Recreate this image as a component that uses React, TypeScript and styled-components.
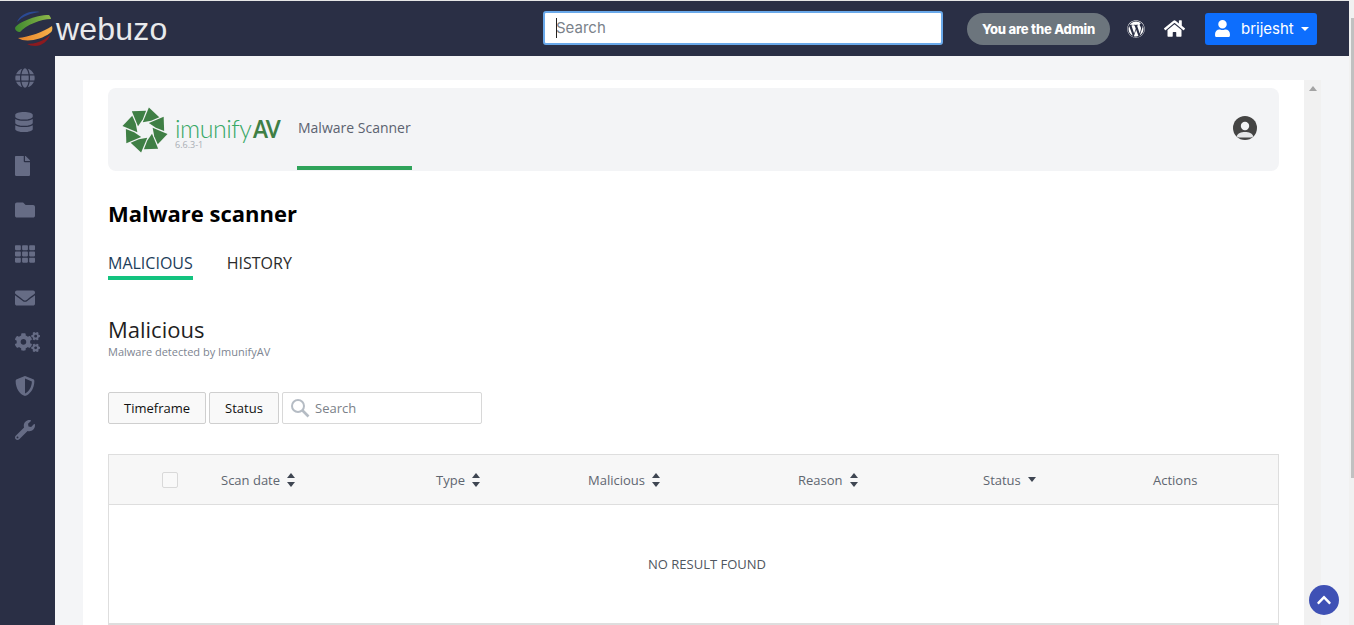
import * as React from "react";
import styled, { createGlobalStyle } from "styled-components";
import {
  FaCogs,
  FaChevronUp,
  FaDatabase,
  FaEnvelope,
  FaFile,
  FaFolder,
  FaGlobe,
  FaHome,
  FaShieldAlt,
  FaTh,
  FaUser,
  FaWordpress,
  FaWrench,
} from "react-icons/fa";

const GlobalStyle = createGlobalStyle`
  html, body {
    margin: 0;
    height: 100%;
    overflow: hidden;
    background: #f4f5f7;
    font-family: "Open Sans", "Noto Sans", sans-serif;
  }
`;

const sideIcons = [
  { icon: FaGlobe, label: "Domains", width: 20 },
  { icon: FaDatabase, label: "Databases", width: 18 },
  { icon: FaFile, label: "Files", width: 15 },
  { icon: FaFolder, label: "Folders", width: 20 },
  { icon: FaTh, label: "Apps", width: 20 },
  { icon: FaEnvelope, label: "Email", width: 20 },
  { icon: FaCogs, label: "Settings", width: 25 },
  { icon: FaShieldAlt, label: "Security", width: 20 },
  { icon: FaWrench, label: "Tools", width: 20 },
];

const columns = [
  { title: "Scan date", sort: "both" },
  { title: "Type", sort: "both" },
  { title: "Malicious", sort: "both" },
  { title: "Reason", sort: "both" },
  { title: "Status", sort: "down" },
  { title: "Actions", sort: "none" },
];

const SphereLogo = () => (
  <svg width="40" height="38" viewBox="0 0 40 38">
    <defs>
      <linearGradient id="greenBand" x1="0" x2="1" y1="0" y2="0">
        <stop offset="0" stopColor="#3f8a2f" />
        <stop offset="1" stopColor="#8fb84a" />
      </linearGradient>
      <linearGradient id="orangeBand" x1="0" x2="1" y1="0" y2="0">
        <stop offset="0" stopColor="#e8842a" />
        <stop offset="1" stopColor="#f5b04a" />
      </linearGradient>
    </defs>
    <path d="M2 12 C5 5 14 0 25 2 C16 3 8 6 2 12Z" fill="#2b4a94" />
    <path d="M0 18 C2 13 20 5 34 5 C35 6 36 8 36 9 C26 9 11 15 5 22 C2 22 0 20 0 18Z" fill="url(#greenBand)" />
    <path d="M3 28 C14 27 28 22 37 16 C38 19 37 22 35 23 C26 30 10 33 3 28Z" fill="url(#orangeBand)" />
    <path d="M12 34 C20 34 29 31 35 25 C33 31 27 36 20 36 C17 36 14 35 12 34Z" fill="#8c1a1f" />
  </svg>
);

const ImunifyMark = () => (
  <svg width="46" height="46" viewBox="-22.5 -22.5 45 45">
    {[0, 45, 90, 135, 180, 225, 270, 315].map(angle => (
      <path
        key={angle}
        d="M-2.2 -7.5 L3.8 -22 L14 -12.5 L6 -9 Z"
        transform={`rotate(${angle})`}
        fill="#3f7f45"
      />
    ))}
  </svg>
);

const AvatarIcon = () => (
  <svg width="24" height="24" viewBox="0 0 24 24">
    <circle cx="12" cy="12" r="12" fill="#444" />
    <circle cx="12" cy="10" r="4.2" fill="#f3f4f6" />
    <path d="M3.6 20.5 C5 17 8 16 12 16 C16 16 19 17 20.4 20.5 C18 22 15 21.5 12 21.5 C9 21.5 6 22 3.6 20.5Z" fill="#e4e5e7" />
  </svg>
);

const SortArrows = ({ sort }: { sort: string }) =>
  sort === "both" ? (
    <svg width="8" height="14" viewBox="0 0 8 14">
      <path d="M4 0 L8 5 H0 Z" fill="#3f4652" />
      <path d="M0 9 H8 L4 14 Z" fill="#3f4652" />
    </svg>
  ) : (
    <svg width="8" height="5" viewBox="0 0 8 5">
      <path d="M0 0 H8 L4 5 Z" fill="#3f4652" />
    </svg>
  );

const SearchGlass = () => (
  <svg width="20" height="20" viewBox="0 0 20 20" fill="none" stroke="#b5bcc4">
    <circle cx="8" cy="8" r="6" strokeWidth="2" />
    <path d="M12.5 12.5 L18.5 18.5" strokeWidth="2.6" />
  </svg>
);

export default function App() {
  return (
    <>
      <GlobalStyle />
      <Page>
        <Column>
          <TopLine />
          <Topbar>
            <Brand>
              <SphereLogo />
              <BrandName>webuzo</BrandName>
            </Brand>
            <SearchWrap>
              <TopSearch placeholder="Search" />
            </SearchWrap>
            <TopActions>
              <AdminPill>You are the Admin</AdminPill>
              <WordpressLink>
                <FaWordpress />
              </WordpressLink>
              <HomeLink>
                <FaHome />
              </HomeLink>
              <UserButton>
                <FaUser size={17} />
                <span>brijesht</span>
                <Caret />
              </UserButton>
            </TopActions>
          </Topbar>
          <Body>
            <Sidebar>
              {sideIcons.map(({ icon: Icon, label, width }) => (
                <SideItem key={label} title={label} $width={width}>
                  <Icon />
                </SideItem>
              ))}
            </Sidebar>
            <Main>
              <Card>
                <PluginBar>
                  <ImunifyMark />
                  <PluginName>
                    <PluginTitle>
                      imunify<strong>AV</strong>
                    </PluginTitle>
                    <PluginVersion>6.6.3-1</PluginVersion>
                  </PluginName>
                  <PluginTab>Malware Scanner</PluginTab>
                  <Avatar>
                    <AvatarIcon />
                  </Avatar>
                </PluginBar>

                <PageTitle>Malware scanner</PageTitle>

                <Tabs>
                  <Tab $active>MALICIOUS</Tab>
                  <Tab>HISTORY</Tab>
                </Tabs>

                <SectionTitle>Malicious</SectionTitle>
                <SectionHint>Malware detected by ImunifyAV</SectionHint>

                <Filters>
                  <FilterButton $width={98}>Timeframe</FilterButton>
                  <FilterButton $width={70}>Status</FilterButton>
                  <FilterSearch>
                    <SearchGlass />
                    <span>Search</span>
                  </FilterSearch>
                </Filters>

                <Table>
                  <TableHead>
                    <CheckCell>
                      <CheckBox />
                    </CheckCell>
                    {columns.map(col => (
                      <HeadCell key={col.title}>
                        {col.title}
                        {col.sort !== "none" && <SortArrows sort={col.sort} />}
                      </HeadCell>
                    ))}
                  </TableHead>
                  <EmptyRow>NO RESULT FOUND</EmptyRow>
                </Table>
              </Card>
              <InnerScroll>
                <ScrollArrow />
              </InnerScroll>
            </Main>
          </Body>
        </Column>
        <OuterScroll>
          <OuterThumb />
        </OuterScroll>
        <BackToTop>
          <FaChevronUp />
        </BackToTop>
      </Page>
    </>
  );
}

const Page = styled.div`
  display: flex;
  height: 625px;
  overflow: hidden;
`;

const Column = styled.div`
  flex: 1;
  min-width: 0;
  display: flex;
  flex-direction: column;
`;

const TopLine = styled.div`
  height: 1px;
  background: #e6e6e6;
`;

const Topbar = styled.header`
  height: 55px;
  flex: none;
  display: flex;
  align-items: center;
  background: #2a2f45;
`;

const Brand = styled.div`
  width: 543px;
  flex: none;
  padding-left: 15px;
  box-sizing: border-box;
  display: flex;
  align-items: center;
  gap: 1px;
`;

const BrandName = styled.span`
  font-family: "Liberation Sans", Arial, sans-serif;
  font-size: 32px;
  letter-spacing: 0.2px;
  color: #e9eaec;
  line-height: 36px;
`;

const SearchWrap = styled.div`
  position: relative;
  margin-top: -2px;
  line-height: 0;
  &::after {
    content: "";
    position: absolute;
    left: 13px;
    top: 7px;
    width: 1px;
    height: 20px;
    background: #222;
  }
`;

const TopSearch = styled.input`
  width: 400px;
  height: 34px;
  box-sizing: border-box;
  padding: 0 11px;
  border: 2px solid #6aa9ea;
  border-radius: 3px;
  outline: none;
  background: #fff;
  font-family: Inter, sans-serif;
  font-size: 15px;
  &::placeholder {
    color: #7a828a;
  }
`;

const TopActions = styled.div`
  margin-left: 24px;
  display: flex;
  align-items: center;
`;

const AdminPill = styled.div`
  width: 143px;
  height: 32px;
  border-radius: 16px;
  background: #6c757d;
  color: #fff;
  font-family: Inter, sans-serif;
  font-weight: 800;
  font-size: 13px;
  letter-spacing: -0.2px;
  display: flex;
  align-items: center;
  justify-content: center;
`;

const WordpressLink = styled.a`
  margin-left: 17px;
  color: #fff;
  font-size: 18px;
  line-height: 0;
`;

const HomeLink = styled.a`
  margin-left: 19px;
  color: #fff;
  font-size: 21px;
  line-height: 0;
`;

const UserButton = styled.button`
  margin-left: 20px;
  width: 112px;
  height: 32px;
  padding: 0 8px 0 9px;
  border: 0;
  border-radius: 3px;
  background: #0d6efd;
  color: #fff;
  font-family: Inter, sans-serif;
  font-size: 15px;
  display: flex;
  align-items: center;
  gap: 10px;
`;

const Caret = styled.i`
  margin-left: -3px;
  border-top: 4px solid #fff;
  border-left: 4px solid transparent;
  border-right: 4px solid transparent;
`;

const Body = styled.div`
  flex: 1;
  min-height: 0;
  display: flex;
`;

const Sidebar = styled.nav`
  width: 55px;
  flex: none;
  background: #2a2f45;
  display: flex;
  flex-direction: column;
`;

const SideItem = styled.div<{ $width: number }>`
  height: 44px;
  padding-left: 15px;
  display: flex;
  align-items: center;
  color: #666c85;
  svg {
    width: ${p => p.$width}px;
    height: 20px;
  }
`;

const Main = styled.main`
  flex: 1;
  min-width: 0;
  display: flex;
  padding: 24px 28px 0;
  background: #f4f5f7;
`;

const Card = styled.section`
  width: 1221px;
  flex: none;
  box-sizing: border-box;
  padding: 8px 25px;
  background: #fff;
`;

const PluginBar = styled.div`
  height: 83px;
  display: flex;
  align-items: center;
  padding-left: 14px;
  background: #f3f4f6;
  border-radius: 8px;
`;

const PluginName = styled.div`
  margin-left: 7px;
  width: 122px;
  padding-top: 5px;
`;

const PluginTitle = styled.div`
  font-family: Lato, sans-serif;
  font-weight: 300;
  font-size: 25px;
  line-height: 24px;
  letter-spacing: -0.5px;
  color: #38a866;
  white-space: nowrap;
  strong {
    display: inline-block;
    margin-left: 2px;
    font-weight: 700;
    letter-spacing: -1px;
    color: #3f7f45;
    transform: scaleX(0.86);
    transform-origin: left center;
  }
`;

const PluginVersion = styled.div`
  font-size: 9px;
  line-height: 9px;
  color: #a9aeb5;
`;

const PluginTab = styled.div`
  align-self: stretch;
  width: 115px;
  box-sizing: border-box;
  margin-bottom: 1px;
  padding-left: 1px;
  display: flex;
  align-items: center;
  border-bottom: 4px solid #2fa35a;
  font-size: 14px;
  color: #5b6270;
  white-space: nowrap;
`;

const Avatar = styled.div`
  margin: 0 22px 3px auto;
  line-height: 0;
`;

const PageTitle = styled.h1`
  margin: 28px 0 0;
  font-size: 22px;
  line-height: 28px;
  font-weight: 700;
  color: #000;
`;

const Tabs = styled.div`
  margin-top: 25px;
  display: flex;
  gap: 34px;
`;

const Tab = styled.div<{ $active?: boolean }>`
  height: 24px;
  line-height: 22px;
  font-size: 16px;
  color: ${p => (p.$active ? "#1c3d5a" : "#2b2b2b")};
  border-bottom: 4px solid ${p => (p.$active ? "#13c37f" : "transparent")};
`;

const SectionTitle = styled.h2`
  margin: 34px 0 0;
  font-size: 22px;
  line-height: 30px;
  font-weight: 400;
  color: #1f1f1f;
`;

const SectionHint = styled.div`
  margin-top: 1px;
  font-size: 11px;
  line-height: 14px;
  color: #7d8591;
`;

const Filters = styled.div`
  margin-top: 33px;
  display: flex;
  gap: 3px;
`;

const FilterButton = styled.button<{ $width: number }>`
  width: ${p => p.$width}px;
  height: 32px;
  padding: 0;
  border: 1px solid #cfcfcf;
  border-radius: 2px;
  background: #f9f9f9;
  color: #111;
  font-family: "Open Sans", sans-serif;
  font-size: 13px;
`;

const FilterSearch = styled.div`
  width: 200px;
  height: 32px;
  box-sizing: border-box;
  padding-left: 7px;
  display: flex;
  align-items: center;
  gap: 5px;
  border: 1px solid #d8d8d8;
  border-radius: 2px;
  background: #fff;
  color: #7b8189;
  font-size: 13px;
`;

const Table = styled.div`
  margin-top: 30px;
  border: 1px solid #dedede;
  border-bottom-width: 2px;
`;

const TableHead = styled.div`
  height: 50px;
  box-sizing: border-box;
  display: grid;
  grid-template-columns: 112px 215px 152px 210px 185px 170px 1fr;
  align-items: center;
  background: #f7f7f7;
  border-bottom: 1px solid #dedede;
`;

const CheckCell = styled.div`
  padding-left: 53px;
  display: flex;
`;

const CheckBox = styled.div`
  width: 14px;
  height: 14px;
  border: 1px solid #d9d9d9;
  border-radius: 2px;
  background: #f9f9f9;
`;

const HeadCell = styled.div`
  display: flex;
  align-items: center;
  gap: 7px;
  font-size: 13px;
  color: #5f6670;
`;

const EmptyRow = styled.div`
  height: 118px;
  padding-left: 27px;
  display: flex;
  align-items: center;
  justify-content: center;
  font-size: 13px;
  color: #4f5660;
`;

const InnerScroll = styled.div`
  width: 17px;
  flex: none;
  background: #f1f1f1;
  display: flex;
  justify-content: center;
  padding-top: 6px;
`;

const ScrollArrow = styled.i`
  width: 0;
  height: 0;
  border-bottom: 5px solid #a3a3a3;
  border-left: 4px solid transparent;
  border-right: 4px solid transparent;
`;

const OuterScroll = styled.div`
  width: 5px;
  flex: none;
  background: #f1f1f1;
`;

const OuterThumb = styled.div`
  margin: 18px 0 0 2px;
  height: 460px;
  background: #c1c1c1;
`;

const BackToTop = styled.a`
  position: absolute;
  left: 1309px;
  top: 585px;
  width: 30px;
  height: 30px;
  border-radius: 50%;
  background: #3f51b5;
  color: #fff;
  font-size: 16px;
  display: flex;
  align-items: center;
  justify-content: center;
`;
